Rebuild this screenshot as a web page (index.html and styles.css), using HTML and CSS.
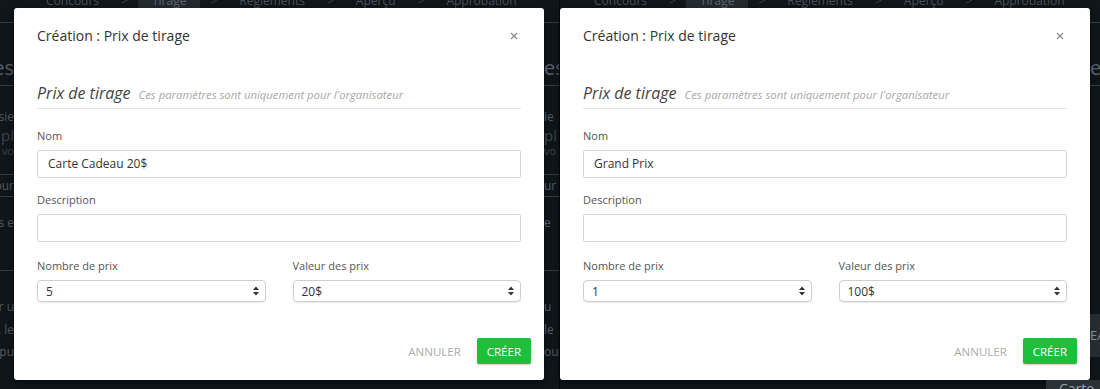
FILE: index.html
```html
<!DOCTYPE html>
<html lang="fr">
<head>
    <meta charset="UTF-8">
    <meta name="viewport" content="width=device-width, initial-scale=1.0">
    <title>Création : Prix de tirage</title>
    <link rel="stylesheet" href="styles.css">
</head>
<body>
    <div class="screen">

        <!-- first capture -->
        <section class="shot shot-first">
            <nav class="crumbs">
                <span>Concours</span><span class="sep">&gt;</span>
                <span class="active">Tirage</span><span class="sep">&gt;</span>
                <span>Règlements</span><span class="sep">&gt;</span>
                <span>Aperçu</span><span class="sep">&gt;</span>
                <span>Approbation</span>
            </nav>
            <div class="shot-body">
                <div class="edge edge-start">
                    <div class="rule mt-14"></div>
                    <div class="frag-lg mt-33">Tirages</div>
                    <div class="rule mt-5"></div>
                    <div class="frag mt-24">plusie</div>
                    <div class="frag-md mt-3">pl</div>
                    <div class="frag-sm mt-2">vo</div>
                    <div class="rule mt-17"></div>
                    <div class="frag mt-4">jour</div>
                    <div class="rule mt-3"></div>
                    <div class="frag mt-19">les e</div>
                    <div class="rule mt-40"></div>
                    <div class="frag mt-29">pour u</div>
                    <div class="frag mt-9">tirée, le</div>
                    <div class="frag mt-8">pu</div>
                </div>

                <div class="modal-col">
                    <div class="modal">
                        <header class="modal-head">
                            <h2 class="modal-title">Création : Prix de tirage</h2>
                            <button class="modal-close" aria-label="Fermer">
                                <svg width="8" height="8" viewBox="0 0 8 8"><path d="M1 1L7 7M7 1L1 7" stroke="#8a8a8a" stroke-width="1.2" fill="none"/></svg>
                            </button>
                        </header>
                        <div class="modal-body">
                            <div class="legend">
                                <span class="legend-title">Prix de tirage</span>
                                <span class="legend-note">Ces paramètres sont uniquement pour l'organisateur</span>
                            </div>
                            <div class="field field-first">
                                <label class="field-label">Nom</label>
                                <div class="input">Carte Cadeau 20$</div>
                            </div>
                            <div class="field">
                                <label class="field-label">Description</label>
                                <div class="input"></div>
                            </div>
                            <div class="field-row">
                                <div>
                                    <label class="field-label">Nombre de prix</label>
                                    <div class="select">
                                        <span>5</span>
                                        <svg width="6" height="10" viewBox="0 0 6 10"><path d="M0 4L3 0.5L6 4Z M0 6L3 9.5L6 6Z" fill="#333"/></svg>
                                    </div>
                                </div>
                                <div>
                                    <label class="field-label">Valeur des prix</label>
                                    <div class="select">
                                        <span>20$</span>
                                        <svg width="6" height="10" viewBox="0 0 6 10"><path d="M0 4L3 0.5L6 4Z M0 6L3 9.5L6 6Z" fill="#333"/></svg>
                                    </div>
                                </div>
                            </div>
                        </div>
                        <footer class="modal-foot">
                            <button class="btn-flat">Annuler</button>
                            <button class="btn-primary">Créer</button>
                        </footer>
                    </div>
                    <div class="below"></div>
                </div>

                <div class="edge edge-end">
                    <div class="rule mt-14"></div>
                    <div class="frag-lg mt-33">es</div>
                    <div class="rule mt-5"></div>
                    <div class="frag mt-24">ie</div>
                    <div class="frag-md mt-3">pl</div>
                    <div class="frag-sm mt-2">vo</div>
                    <div class="rule mt-17"></div>
                    <div class="frag mt-4">ur</div>
                    <div class="rule mt-3"></div>
                    <div class="frag mt-19">e</div>
                    <div class="rule mt-40"></div>
                    <div class="frag mt-29">u</div>
                    <div class="frag mt-9">le</div>
                    <div class="frag mt-8">ou</div>
                </div>
            </div>
        </section>

        <!-- second capture -->
        <section class="shot shot-second">
            <nav class="crumbs crumbs-second">
                <span>Concours</span><span class="sep">&gt;</span>
                <span class="active">Tirage</span><span class="sep">&gt;</span>
                <span>Règlements</span><span class="sep">&gt;</span>
                <span>Aperçu</span><span class="sep">&gt;</span>
                <span>Approbation</span>
            </nav>
            <div class="shot-body">
                <div class="modal-col">
                    <div class="modal">
                        <header class="modal-head">
                            <h2 class="modal-title">Création : Prix de tirage</h2>
                            <button class="modal-close" aria-label="Fermer">
                                <svg width="8" height="8" viewBox="0 0 8 8"><path d="M1 1L7 7M7 1L1 7" stroke="#8a8a8a" stroke-width="1.2" fill="none"/></svg>
                            </button>
                        </header>
                        <div class="modal-body">
                            <div class="legend">
                                <span class="legend-title">Prix de tirage</span>
                                <span class="legend-note">Ces paramètres sont uniquement pour l'organisateur</span>
                            </div>
                            <div class="field field-first">
                                <label class="field-label">Nom</label>
                                <div class="input">Grand Prix</div>
                            </div>
                            <div class="field">
                                <label class="field-label">Description</label>
                                <div class="input"></div>
                            </div>
                            <div class="field-row">
                                <div>
                                    <label class="field-label">Nombre de prix</label>
                                    <div class="select">
                                        <span>1</span>
                                        <svg width="6" height="10" viewBox="0 0 6 10"><path d="M0 4L3 0.5L6 4Z M0 6L3 9.5L6 6Z" fill="#333"/></svg>
                                    </div>
                                </div>
                                <div>
                                    <label class="field-label">Valeur des prix</label>
                                    <div class="select">
                                        <span>100$</span>
                                        <svg width="6" height="10" viewBox="0 0 6 10"><path d="M0 4L3 0.5L6 4Z M0 6L3 9.5L6 6Z" fill="#333"/></svg>
                                    </div>
                                </div>
                            </div>
                        </div>
                        <footer class="modal-foot">
                            <button class="btn-flat">Annuler</button>
                            <button class="btn-primary">Créer</button>
                        </footer>
                    </div>
                    <div class="below">
                        <div class="below-tile">Carte</div>
                    </div>
                </div>

                <div class="edge edge-end edge-narrow">
                    <div class="rule mt-14"></div>
                    <div class="frag-lg mt-33">es</div>
                    <div class="rule mt-5"></div>
                    <div class="tile mt-228">EA</div>
                </div>
            </div>
        </section>

    </div>
</body>
</html>
```

FILE: styles.css
```css
body {
    margin: 0;
    background: #10161a;
    font-family: 'Open Sans', 'Liberation Sans', sans-serif;
    color: #333;
}
.screen {
    display: flex;
    width: 1100px;
    height: 389px;
    overflow: hidden;
}
.shot {
    display: flex;
    flex-direction: column;
    height: 389px;
    box-sizing: border-box;
}
.shot-first {
    width: 559px;
}
.shot-second {
    width: 541px;
    border-left: 1px solid #04070a;
}

/* breadcrumb of the page behind the dialog */
.crumbs {
    flex: none;
    height: 8px;
    display: flex;
    gap: 22px;
    padding-left: 46px;
    font-size: 12px;
    line-height: 14px;
    color: #4a535b;
    white-space: nowrap;
    overflow: hidden;
}
.crumbs span {
    margin-top: -6px;
}
.crumbs-second {
    padding-left: 34px;
}
.crumbs .sep {
    color: #3d454c;
}
.crumbs .active {
    background: #242b30;
    color: #5e676f;
    padding: 0 14px;
    margin-left: -12px;
    margin-right: -12px;
}
.shot-body {
    flex: 1;
    min-height: 0;
    display: flex;
}

/* slices of the page visible beside the dialog */
.edge {
    display: flex;
    flex-direction: column;
    overflow: hidden;
    white-space: nowrap;
    color: #535c64;
    font-size: 12px;
    line-height: 14px;
}
.edge-start {
    width: 14px;
    align-items: flex-end;
}
.edge-end {
    width: 15px;
    align-items: flex-start;
}
.edge-narrow {
    width: 10px;
}
.edge .rule {
    align-self: stretch;
    flex: none;
    height: 1px;
    background: #353d43;
}
.frag-lg {
    font-size: 20px;
    line-height: 24px;
    color: #56606a;
}
.frag-md {
    font-size: 15px;
    line-height: 16px;
    color: #3f474e;
}
.frag-sm {
    font-size: 11px;
    line-height: 12px;
    color: #3f474e;
}
.tile {
    align-self: stretch;
    flex: none;
    height: 43px;
    line-height: 43px;
    background: #252c31;
    color: #858e95;
    font-size: 13px;
}
.mt-2 { margin-top: 2px; }
.mt-3 { margin-top: 3px; }
.mt-4 { margin-top: 4px; }
.mt-5 { margin-top: 5px; }
.mt-8 { margin-top: 8px; }
.mt-9 { margin-top: 9px; }
.mt-14 { margin-top: 14px; }
.mt-17 { margin-top: 17px; }
.mt-19 { margin-top: 19px; }
.mt-24 { margin-top: 24px; }
.mt-29 { margin-top: 29px; }
.mt-33 { margin-top: 33px; }
.mt-40 { margin-top: 40px; }
.mt-228 { margin-top: 228px; }

.modal-col {
    width: 530px;
    display: flex;
    flex-direction: column;
}
.below {
    height: 9px;
    flex: none;
    display: flex;
    justify-content: flex-end;
}
.below-tile {
    width: 41px;
    height: 9px;
    margin-right: -10px;
    padding-left: 13px;
    background: #2a3237;
    color: #9aa2a8;
    font-size: 14px;
    line-height: 18px;
    overflow: hidden;
}

/* dialog */
.modal {
    height: 372px;
    flex: none;
    background: #fff;
    border-radius: 3px;
    box-shadow: 0 3px 10px rgba(0, 0, 0, 0.5);
    display: flex;
    flex-direction: column;
}
.modal-head {
    display: flex;
    justify-content: space-between;
    align-items: center;
    padding: 18px 23px 0 23px;
}
.modal-title {
    margin: 0;
    font-size: 14px;
    font-weight: 400;
    line-height: 20px;
    color: #333;
}
.modal-close {
    border: none;
    background: none;
    padding: 0;
    width: 14px;
    height: 14px;
    display: flex;
    align-items: center;
    justify-content: center;
    cursor: pointer;
}
.modal-body {
    padding: 0 23px;
}
.legend {
    margin-top: 36px;
    height: 22px;
    padding-bottom: 4px;
    border-bottom: 1px solid #e6e6e6;
    display: flex;
    align-items: baseline;
    gap: 8px;
    white-space: nowrap;
}
.legend-title {
    font-size: 16px;
    line-height: 22px;
    font-style: italic;
    color: #444;
}
.legend-note {
    font-size: 11.3px;
    line-height: 14px;
    font-style: italic;
    color: #a8a8a8;
}
.field {
    margin-top: 14px;
}
.field-first {
    margin-top: 19px;
}
.field-label {
    display: block;
    font-size: 11px;
    line-height: 16px;
    color: #555;
    margin-bottom: 6px;
}
.input {
    height: 28px;
    box-sizing: border-box;
    border: 1px solid #d6d6d6;
    border-radius: 2px;
    padding: 0 10px;
    font-size: 12px;
    line-height: 26px;
    color: #333;
}
.field-row {
    margin-top: 16px;
    display: grid;
    grid-template-columns: 1fr 1fr;
    gap: 27px;
}
.select {
    height: 22px;
    box-sizing: border-box;
    border: 1px solid #cfcfcf;
    border-radius: 4px;
    box-shadow: 0 1px 1px rgba(0, 0, 0, 0.08);
    padding: 0 6px 0 8px;
    display: flex;
    align-items: center;
    justify-content: space-between;
    font-size: 12px;
    color: #333;
}
.modal-foot {
    margin-top: 36px;
    padding: 0 13px;
    display: flex;
    justify-content: flex-end;
    gap: 8px;
}
.btn-flat,
.btn-primary {
    height: 26px;
    border: none;
    border-radius: 2px;
    font-family: inherit;
    font-size: 11.5px;
    text-transform: uppercase;
    cursor: pointer;
}
.btn-flat {
    background: none;
    color: #ababab;
    padding: 0 8px;
}
.btn-primary {
    background: #1fbf3c;
    color: #fff;
    padding: 0 10px;
    box-shadow: 0 1px 2px rgba(0, 0, 0, 0.2);
}
```
